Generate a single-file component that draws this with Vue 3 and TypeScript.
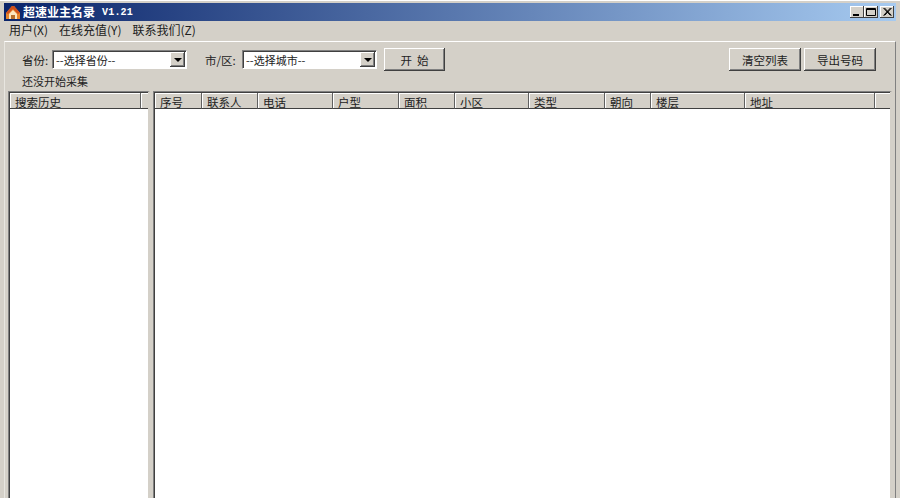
<script setup lang="ts">
interface Col { label: string; width: number }
const cols: Col[] = [
  { label: '序号', width: 47 },
  { label: '联系人', width: 56 },
  { label: '电话', width: 75 },
  { label: '户型', width: 66 },
  { label: '面积', width: 56 },
  { label: '小区', width: 74 },
  { label: '类型', width: 76 },
  { label: '朝向', width: 46 },
  { label: '楼层', width: 94 },
  { label: '地址', width: 130 },
]
</script>

<template>
  <div class="win">
    <div class="titlebar">
      <svg class="appicon" width="16" height="16" viewBox="0 0 16 16">
        <path d="M1 9 L7 2 L9 2 L15 9 L15 15 L1 15 Z" fill="#e8862c" />
        <path d="M7 2 L1 9 L3 10 L8 5 L13 10 L15 9 L9 2 Z" fill="#d0501c" />
        <path d="M4 10 L8 6 L12 10 L12 15 L4 15 Z" fill="#fbe6c0" />
        <rect x="6" y="11" width="4" height="4" fill="#b8702c" />
      </svg>
      <span class="title">超速业主名录</span>
      <span class="ver">V1.21</span>
      <div class="capbtns">
        <div class="cap">
          <svg width="14" height="12" viewBox="0 0 14 12"><rect x="3" y="8" width="6" height="2" fill="#000" /></svg>
        </div>
        <div class="cap">
          <svg width="14" height="12" viewBox="0 0 14 12"><path d="M2.5 2.5h9v7h-9z M2.5 3.5h9" fill="none" stroke="#000" /></svg>
        </div>
        <div class="cap gapl">
          <svg width="14" height="12" viewBox="0 0 14 12"><path d="M3.5 2l7 7.5M4.5 2l7 7.5M10.5 2l-7 7.5M11.5 2l-7 7.5" stroke="#000" stroke-width="1" fill="none" /></svg>
        </div>
      </div>
    </div>

    <div class="menubar">
      <span class="mi">用户(X)</span>
      <span class="mi">在线充值(Y)</span>
      <span class="mi">联系我们(Z)</span>
    </div>

    <div class="panel">
      <div class="toolbar">
        <span class="lbl first">省份:</span>
        <div class="combo">
          <span class="val">--选择省份--</span>
          <div class="arrow"><i></i></div>
        </div>
        <span class="lbl second">市/区:</span>
        <div class="combo">
          <span class="val">--选择城市--</span>
          <div class="arrow"><i></i></div>
        </div>
        <button class="btn start">开&nbsp;&nbsp;始</button>
        <div class="spacer"></div>
        <button class="btn wide">清空列表</button>
        <button class="btn wide">导出号码</button>
      </div>
      <div class="status">还没开始采集</div>

      <div class="lists">
        <div class="listview left">
          <div class="head">
            <div class="hc hist">搜索历史</div>
            <div class="hc fill"></div>
          </div>
        </div>
        <div class="listview right">
          <div class="head">
            <div v-for="c in cols" :key="c.label" class="hc" :style="{ width: c.width + 'px' }">{{ c.label }}</div>
            <div class="hc fill"></div>
          </div>
        </div>
      </div>
    </div>
  </div>
</template>

<style>
html, body { margin: 0; background: #d4d0c8; overflow: hidden; }
</style>

<style scoped>
.win {
  width: 900px;
  height: 498px;
  box-sizing: border-box;
  background: #d4d0c8;
  padding: 2px 4px 0;
  display: flex;
  flex-direction: column;
  font-family: "Noto Sans CJK SC", "Liberation Sans", sans-serif;
  font-size: 11px;
  color: #000;
  overflow: hidden;
  border-top: 1px solid #fff;
}
.titlebar {
  height: 18px;
  flex: none;
  display: flex;
  align-items: center;
  background: linear-gradient(90deg, #0a246a, #a6caf0);
  color: #fff;
  font-weight: 700;
  padding-left: 1px;
  padding-right: 2px;
}
.appicon { margin-right: 2px; flex: none; }
.title { font-size: 12px; line-height: 18px; }
.ver {
  font-family: "Liberation Mono", monospace;
  font-size: 10px;
  margin-left: 7px;
  letter-spacing: 0.2px;
}
.capbtns { margin-left: auto; display: flex; }
.cap {
  width: 14px;
  height: 12px;
  background: #d4d0c8;
  box-shadow: inset -1px -1px 0 #404040, inset 1px 1px 0 #fff;
  display: flex;
}
.gapl { margin-left: 2px; }
.menubar {
  height: 17px;
  flex: none;
  display: flex;
  align-items: center;
  gap: 11px;
  padding-left: 5px;
  font-size: 12px;
  color: #202020;
}
.panel {
  flex: 1;
  min-height: 0;
  margin-top: 3px;
  border-top: 1px solid #fff;
  border-left: 1px solid #e8e6e0;
  border-right: 1px solid #808080;
  display: flex;
  flex-direction: column;
  padding: 6px 3px 0 3px;
  box-sizing: border-box;
}
.toolbar {
  display: flex;
  align-items: center;
  height: 23px;
  flex: none;
  padding-right: 16px;
}
.lbl { color: #222; white-space: nowrap; font-size: 11.5px; }
.first { margin-left: 14px; width: 30px; }
.second { margin-left: 18px; width: 37px; }
.combo {
  width: 135px;
  height: 19px;
  box-sizing: border-box;
  background: #fff;
  border-top: 1px solid #808080;
  border-left: 1px solid #808080;
  border-right: 1px solid #fff;
  border-bottom: 1px solid #fff;
  box-shadow: inset 1px 1px 0 #404040;
  display: flex;
  align-items: center;
  justify-content: space-between;
  padding: 1px 1px 1px 3px;
}
.val { color: #222; }
.arrow {
  width: 15px;
  height: 15px;
  background: #d4d0c8;
  box-shadow: inset -1px -1px 0 #404040, inset 1px 1px 0 #fff, inset -2px -2px 0 #808080;
  display: flex;
  align-items: center;
  justify-content: center;
}
.arrow i {
  width: 0;
  height: 0;
  border-left: 4px solid transparent;
  border-right: 4px solid transparent;
  border-top: 4px solid #000;
}
.btn {
  height: 23px;
  box-sizing: border-box;
  border: 0;
  background: #d4d0c8;
  box-shadow: inset -1px -1px 0 #404040, inset 1px 1px 0 #fff, inset -2px -2px 0 #808080;
  font: inherit;
  font-size: 11.5px;
  color: #222;
  padding: 0;
}
.start { width: 61px; margin-left: 7px; }
.wide { width: 72px; margin-left: 3px; }
.spacer { flex: 1; }
.status { height: 20px; line-height: 20px; margin-left: 14px; flex: none; color: #222; }
.lists {
  flex: 1;
  min-height: 0;
  display: flex;
  gap: 3px;
}
.listview {
  box-sizing: border-box;
  background: #fff;
  border-top: 1px solid #808080;
  border-left: 1px solid #808080;
  box-shadow: inset 1px 1px 0 #404040;
  padding: 1px 0 0 1px;
  display: flex;
  flex-direction: column;
  overflow: hidden;
}
.left { width: 142px; flex: none; border-right: 2px solid #d4d0c8; }
.right { flex: 1; min-width: 0; border-right: 2px solid #d4d0c8; }
.head {
  display: flex;
  height: 16px;
  flex: none;
  background: #d4d0c8;
}
.hc {
  box-sizing: border-box;
  height: 16px;
  padding-left: 5px;
  line-height: 18px;
  font-size: 11.5px;
  white-space: nowrap;
  overflow: hidden;
  color: #222;
  border-right: 1px solid #606060;
  border-bottom: 1px solid #404040;
  box-shadow: inset 1px 1px 0 #fff;
  flex: none;
}
.hist { width: 131px; }
.fill { flex: 1; border-right: 0; }
</style>
